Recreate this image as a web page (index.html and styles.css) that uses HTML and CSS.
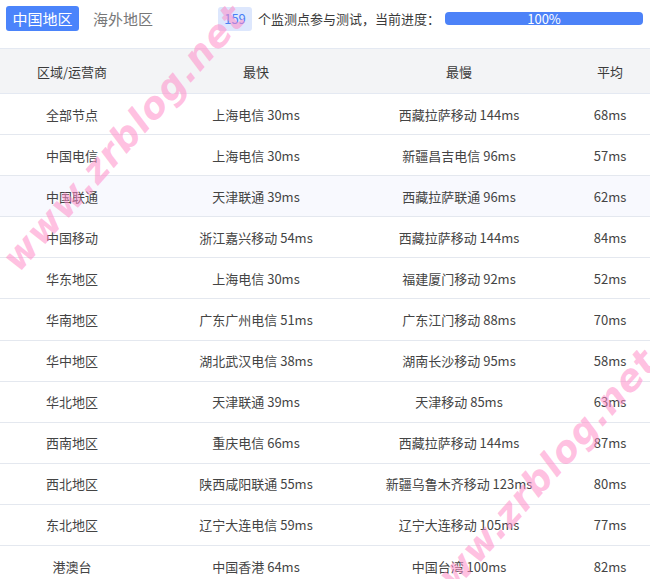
FILE: index.html
```html
<!DOCTYPE html>
<html lang="zh-CN">
<head>
<meta charset="utf-8">
<title>监测结果</title>
<link rel="stylesheet" href="styles.css">
</head>
<body>
<div class="page">
  <div class="toolbar">
    <span class="tab tab-active">中国地区</span>
    <span class="tab">海外地区</span>
    <span class="badge">159</span>
    <span class="label">个监测点参与测试，当前进度：</span>
    <div class="progress"><div class="progress-bar" style="width:100%">100%</div></div>
  </div>
  <table class="result">
    <colgroup>
      <col class="c1"><col class="c2"><col class="c3"><col class="c4">
    </colgroup>
    <thead>
      <tr><th>区域/运营商</th><th>最快</th><th>最慢</th><th>平均</th></tr>
    </thead>
    <tbody>
      <tr><td>全部节点</td><td>上海电信 30ms</td><td>西藏拉萨移动 144ms</td><td>68ms</td></tr>
      <tr><td>中国电信</td><td>上海电信 30ms</td><td>新疆昌吉电信 96ms</td><td>57ms</td></tr>
      <tr class="hl"><td>中国联通</td><td>天津联通 39ms</td><td>西藏拉萨联通 96ms</td><td>62ms</td></tr>
      <tr><td>中国移动</td><td>浙江嘉兴移动 54ms</td><td>西藏拉萨移动 144ms</td><td>84ms</td></tr>
      <tr><td>华东地区</td><td>上海电信 30ms</td><td>福建厦门移动 92ms</td><td>52ms</td></tr>
      <tr><td>华南地区</td><td>广东广州电信 51ms</td><td>广东江门移动 88ms</td><td>70ms</td></tr>
      <tr><td>华中地区</td><td>湖北武汉电信 38ms</td><td>湖南长沙移动 95ms</td><td>58ms</td></tr>
      <tr><td>华北地区</td><td>天津联通 39ms</td><td>天津移动 85ms</td><td>63ms</td></tr>
      <tr><td>西南地区</td><td>重庆电信 66ms</td><td>西藏拉萨移动 144ms</td><td>87ms</td></tr>
      <tr><td>西北地区</td><td>陕西咸阳联通 55ms</td><td>新疆乌鲁木齐移动 123ms</td><td>80ms</td></tr>
      <tr><td>东北地区</td><td>辽宁大连电信 59ms</td><td>辽宁大连移动 105ms</td><td>77ms</td></tr>
      <tr><td>港澳台</td><td>中国香港 64ms</td><td>中国台湾 100ms</td><td>82ms</td></tr>
    </tbody>
  </table>
  <div class="wm wm-1">www.zrblog.net</div>
  <div class="wm wm-2">www.zrblog.net</div>
</div>
</body>
</html>
```
FILE: styles.css
```css
html, body {
  margin: 0;
  padding: 0;
  overflow: hidden;
  background: #fff;
}
.page {
  position: relative;
  width: 650px;
  height: 579px;
  overflow: hidden;
  font-family: "Noto Sans CJK SC", "Microsoft YaHei", sans-serif;
  font-size: 13px;
  color: #444;
}
.toolbar {
  display: flex;
  align-items: center;
  height: 37px;
  padding: 0 0 11px 6px;
}
.tab {
  font-size: 15px;
  line-height: 25px;
  color: #777;
}
.tab-active {
  background: #4b84fb;
  color: #fff;
  border-radius: 3px;
  width: 73px;
  text-align: center;
  margin-right: 14px;
}
.badge {
  margin-left: 65px;
  width: 34px;
  height: 24px;
  line-height: 24px;
  text-align: center;
  background: #dde7fd;
  color: #4a80f5;
  border-radius: 3px;
  font-size: 13px;
}
.label {
  margin-left: 6px;
  color: #3a3a3a;
}
.progress {
  margin-left: 5px;
  width: 198px;
  height: 13px;
  border-radius: 4px;
  background: #e8eefb;
  overflow: hidden;
}
.progress-bar {
  height: 13px;
  line-height: 13px;
  background: #4c82f8;
  color: #fff;
  text-align: center;
  font-size: 13px;
}
.result {
  width: 670px;
  border-collapse: collapse;
  table-layout: fixed;
}
.c1 { width: 144px; }
.c2 { width: 224px; }
.c3 { width: 182px; }
.c4 { width: 120px; }
.result th {
  height: 44px;
  font-weight: normal;
  color: #3a3a3a;
  background: #f3f4f6;
  border-top: 1px solid #e4e9f2;
  border-bottom: 1px solid #e4e9f2;
  text-align: center;
  padding: 0;
}
.result td {
  height: 40.1px;
  padding: 0;
  text-align: center;
  border-bottom: 1px solid #e4e8ef;
  white-space: nowrap;
}
.result tr.hl td {
  background: #f8f9fe;
}
.wm {
  position: absolute;
  font-family: "DejaVu Sans", sans-serif;
  font-weight: bold;
  font-style: italic;
  font-size: 37px;
  color: rgba(255, 140, 200, 0.55);
  white-space: nowrap;
  pointer-events: none;
  transform: translate(-50%, -50%) rotate(-48deg);
  letter-spacing: 1px;
}
.wm-1 { left: 124px; top: 138px; }
.wm-2 { left: 536px; top: 482px; }
```
